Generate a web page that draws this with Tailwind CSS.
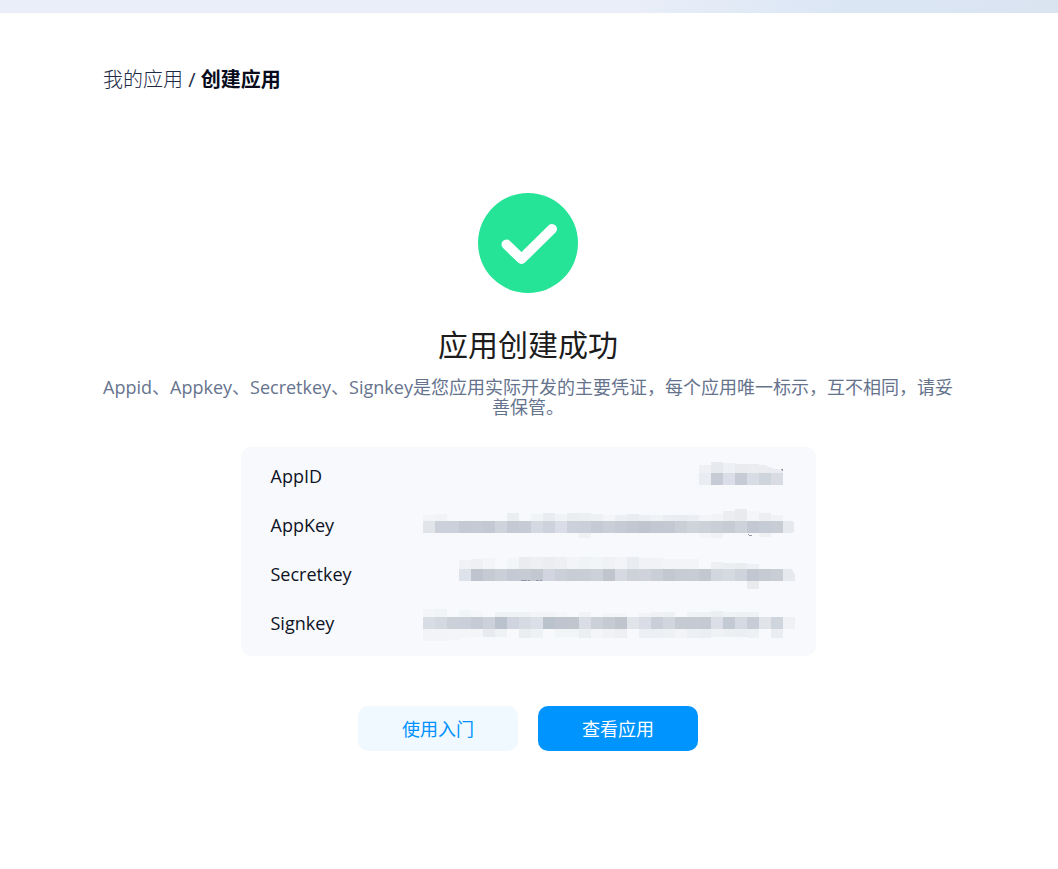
<!DOCTYPE html>
<html lang="zh-CN">
<head>
  <meta charset="UTF-8" />
  <meta name="viewport" content="width=device-width, initial-scale=1.0" />
  <title>创建应用</title>
  <script src="https://cdn.jsdelivr.net/npm/@tailwindcss/browser@4"></script>
</head>
<body class="min-h-screen bg-white font-['Open_Sans','Noto_Sans_CJK_SC',sans-serif]">
  <div class="h-[13px] bg-linear-to-r from-[#e9eef8] from-60% via-[#dbe6f5] via-80% to-[#dae4f1]"></div>

  <nav aria-label="breadcrumb" class="mt-[52px] pl-[103px] text-[20px] leading-[30px] text-[#1c2b47]">
    <a href="#" class="font-light">我的应用</a>
    <span>/</span>
    <span class="font-bold text-[#080c1c]">创建应用</span>
  </nav>

  <main class="mt-[98px] flex flex-col items-center pr-0.5">
    <svg class="size-[100px]" viewBox="0 0 100 100" fill="none" aria-hidden="true">
      <circle cx="50" cy="50" r="50" fill="#25e397" />
      <path d="M28.5 51.5 43.5 66 74 36" stroke="#fff" stroke-width="10" stroke-linecap="round" stroke-linejoin="round" />
    </svg>

    <h1 class="mt-8 text-[30px] leading-10 text-[#1c1c1c]">应用创建成功</h1>
    <p class="mt-3 max-w-[855px] text-center text-lg/5 text-[#66738d]">Appid、Appkey、Secretkey、Signkey是您应用实际开发的主要凭证，每个应用唯一标示，互不相同，请妥善保管。</p>

    <dl class="mt-[30px] w-full max-w-[575px] rounded-[10px] bg-[#f8f9fd] pt-[5px] pr-[21px] pb-2 pl-[30px] text-lg text-[#0d1324]">
      <div class="flex h-[49px] items-center justify-between">
        <dt class="pb-0.5">AppID</dt>
        <dd><svg class="mosaic h-[49px] w-[372px]" viewBox="0 0 372 49" shape-rendering="crispEdges"></svg></dd>
      </div>
      <div class="flex h-[49px] items-center justify-between">
        <dt class="pb-0.5">AppKey</dt>
        <dd><svg class="mosaic h-[49px] w-[372px]" viewBox="0 0 372 49" shape-rendering="crispEdges"></svg></dd>
      </div>
      <div class="flex h-[49px] items-center justify-between">
        <dt class="pb-0.5">Secretkey</dt>
        <dd><svg class="mosaic h-[49px] w-[372px]" viewBox="0 0 372 49" shape-rendering="crispEdges"></svg></dd>
      </div>
      <div class="flex h-[49px] items-center justify-between">
        <dt class="pb-0.5">Signkey</dt>
        <dd><svg class="mosaic h-[49px] w-[372px]" viewBox="0 0 372 49" shape-rendering="crispEdges"></svg></dd>
      </div>
    </dl>

    <div class="mt-[50px] flex gap-5 text-lg">
      <button type="button" class="h-[45px] w-40 rounded-[10px] bg-[#f0f9ff] text-[#0090ff]">使用入门</button>
      <button type="button" class="h-[45px] w-40 rounded-[10px] bg-[#0094ff] text-white">查看应用</button>
    </div>
  </main>

  <script>
    // masked values: 12px blocks, y = top of the main strip, start = first column
    // above / below: [column, height, colour]
    const masks = [
      {
        y: 21, start: 23,
        main: 'e9ecf1 c6cbd5 dbdee8 c6cbd5 d8dce4 cfd5dc d9dce4',
        above: [[23, 8, 'eef0f4'], [24, 11, 'e6e9ee'], [25, 10, 'edf0f4'], [26, 9, 'e9ebef'], [27, 9, 'eaecf0'], [28, 8, 'eaecf0'], [29, 5, 'e9ebf0']],
        below: [],
        edge: 'M276 10 Q290 8 306 11 L340 12 Q348 17 360 18 V8 H276Z',
        dots: [[358, 17, 2, 1], [359, 18, 1, 1]]
      },
      {
        y: 20, start: 0,
        main: 'e1e5e9 cbd0da cbd0da c5c9d3 c6cad4 c3c8d2 ced3dc c5c9d3 c7cbd5 d3d8e1 cdd2dc dadde7 cbd0da cad0d9 c6cad4 c9ced7 c5cad4 c2c7d1 c0c4cf c3c7d1 c4c8d2 c9ced7 cfd4dc cdd2da c9ced7 c6cbd4 ced3db c4c8d2 c6ccd5 c7ccd5 e6e9ee',
        above: [[0, 6, 'f2f4f7'], [1, 7, 'f1f3f6'], [7, 8, 'ebeef1'], [9, 7, 'f1f4f7'], [10, 8, 'e9ecf0'], [11, 7, 'f0f3f5'], [12, 8, 'ebeef1'], [13, 8, 'eceff2'], [14, 7, 'eef1f4'], [15, 6, 'f3f5f8'], [16, 6, 'eceff3'], [17, 7, 'e9ecf0'], [18, 6, 'eceff3'], [19, 6, 'f0f3f6'], [20, 6, 'eaedf1'], [21, 6, 'e9ecf0'], [22, 6, 'ebeef2'], [23, 6, 'f2f4f7'], [24, 7, 'f1f3f7'], [25, 10, 'ebedf1'], [26, 12, 'e8eaee'], [27, 10, 'f3f5f8'], [28, 8, 'eceef2'], [29, 6, 'f0f2f6']],
        below: [[13, 5, 'eff1f4'], [23, 5, 'f3f5f8'], [24, 5, 'f0f2f6'], [28, 4, 'eef0f4']],
        edge: 'M369 19 L371 22 V30 L369 33 H373 V19Z',
        dots: [[325, 33, 1, 1], [326, 34, 3, 1]]
      },
      {
        y: 19, start: 3,
        main: 'dee2ea bfc4cf c6cad3 cacfd8 c5c9d3 c7cbd4 c3c8d0 d2d5df cbcfd8 c8cdd5 c8cdd6 cbd0d9 bfc4cd d6d9e1 cdd1da d0d2dc c9ced7 c3c8d0 c7ccd4 c8cdd5 c3c8d0 d2d7df d5dae1 cfd4dc c1c6d0 c5cad3 c9ced6 e6e9ed',
        above: [[3, 9, 'f0f2f5'], [4, 10, 'eef0f3'], [5, 11, 'f3f5f8'], [7, 11, 'f3f6f9'], [8, 12, 'ebecf0'], [9, 12, 'eeeff3'], [10, 12, 'ebedf1'], [11, 12, 'eeeff3'], [12, 12, 'f3f4f7'], [13, 12, 'eff3f5'], [14, 12, 'f2f5f7'], [15, 12, 'f0f1f5'], [16, 12, 'f2f4f7'], [17, 12, 'e9edf1'], [18, 11, 'f0f2f5'], [19, 11, 'f0f2f6'], [20, 10, 'f3f4f8'], [21, 10, 'f2f4f7'], [22, 10, 'f2f4f7'], [24, 7, 'edeff3'], [25, 6, 'eceff2'], [26, 6, 'eaedf0'], [27, 5, 'edf0f4']],
        below: [[27, 8, 'e8eaee']],
        edge: 'M367 18 Q371 20 372 26 H373 V18Z',
        dots: [[98, 30, 6, 1], [105, 30, 2, 1], [113, 30, 3, 1], [117, 30, 2, 1]]
      },
      {
        y: 18, start: 0,
        main: 'd8dce5 d3d8e1 cbd0d9 cacfd9 c5cad4 ccd1da bac2cd cfd4de d6dae3 dcdfe8 bac2cc bfc4ce c0c5ce dadde6 cbd0d9 c5cad3 bfc4cd e1e4e8 dadce6 c9ced8 d0d5de c5cad3 c6cad3 c4c9d2 dbdee7 c4cad4 d5d9e1 c7ccd6 e1e4e9 cfd5dd eff1f5',
        above: [[0, 8, 'f3f5f8'], [1, 8, 'f1f4f7'], [3, 7, 'f2f5f7'], [4, 6, 'f4f6f9'], [6, 5, 'eff2f5'], [7, 5, 'eff2f5'], [8, 5, 'eff2f5'], [9, 5, 'f3f4f7'], [10, 5, 'f3f4f8'], [11, 5, 'f4f6f9'], [13, 5, 'f0f2f6'], [15, 4, 'f3f5f8'], [16, 4, 'f3f5f8'], [18, 4, 'f1f3f7'], [19, 5, 'eff1f5'], [20, 5, 'eef1f4'], [22, 5, 'f0f3f6'], [23, 5, 'eff2f5'], [24, 6, 'ebeff2'], [25, 5, 'f0f3f6'], [26, 5, 'eef1f4'], [27, 5, 'eff2f5']],
        below: [[0, 12, 'f2f4f7'], [1, 12, 'f2f4f7'], [2, 11, 'f3f5f8'], [3, 9, 'f3f5f8'], [4, 8, 'f3f5f8'], [5, 8, 'e7eaee'], [6, 8, 'eff2f5'], [8, 9, 'ebeef1'], [9, 9, 'eff2f5'], [11, 8, 'f2f5f8'], [12, 8, 'f2f5f8'], [13, 9, 'eceff2'], [14, 9, 'f3f5f8'], [15, 9, 'f0f2f6'], [16, 9, 'edeff3'], [18, 9, 'eceff3'], [19, 9, 'eceff3'], [20, 9, 'eef1f4'], [21, 9, 'f2f4f7'], [22, 9, 'eceff3'], [23, 9, 'ebeef2'], [24, 8, 'eff2f5'], [25, 8, 'edf0f3'], [26, 8, 'ebeef2'], [27, 9, 'eef1f4'], [29, 9, 'eaedf1']],
        edge: '',
        dots: []
      }
    ];

    document.querySelectorAll('.mosaic').forEach((svg, i) => {
      const m = masks[i];
      const block = (x, y, w, h, c) => `<rect x="${x}" y="${y}" width="${w}" height="${h}" fill="#${c}"/>`;
      let out = '';
      m.main.split(' ').forEach((c, n) => out += block((m.start + n) * 12, m.y, 12, 12, c));
      m.above.forEach(([col, h, c]) => out += block(col * 12, m.y - h, 12, h, c));
      m.below.forEach(([col, h, c]) => out += block(col * 12, m.y + 12, 12, h, c));
      if (m.edge) out += `<path d="${m.edge}" fill="#f8f9fd"/>`;
      m.dots.forEach(([x, y, w, h]) => out += block(x, y, w, h, '9297a5'));
      svg.innerHTML = out;
    });
  </script>
</body>
</html>
